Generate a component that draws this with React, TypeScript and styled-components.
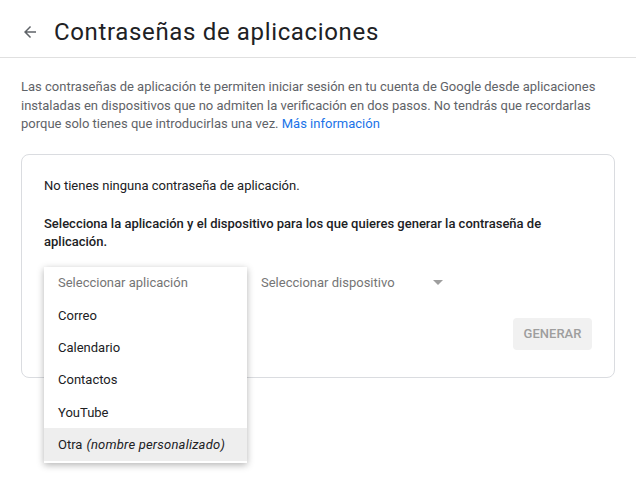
import React from 'react';
import styled, { createGlobalStyle } from 'styled-components';

const GlobalStyle = createGlobalStyle`
  html, body {
    margin: 0;
    padding: 0;
    background: #fff;
    font-family: Roboto, "Liberation Sans", Arial, sans-serif;
    -webkit-font-smoothing: antialiased;
  }
`;

const Page = styled.div`
  width: 636px;
  height: 484px;
  overflow: hidden;
  background: #fff;
`;

const Header = styled.header`
  display: flex;
  align-items: center;
  height: 58px;
  padding: 6px 0 0 20px;
  box-sizing: border-box;
  border-bottom: 1px solid #e0e0e0;
`;

const BackButton = styled.button`
  display: flex;
  align-items: center;
  justify-content: center;
  width: 20px;
  height: 20px;
  padding: 0;
  margin-right: 14px;
  border: none;
  background: none;
  color: #5f6368;
  cursor: pointer;
`;

const Title = styled.h1`
  margin: 0;
  font-family: Roboto, "Liberation Sans", Arial, sans-serif;
  font-size: 24px;
  font-weight: 400;
  color: #202124;
  letter-spacing: 0.65px;
`;

const Content = styled.main`
  padding: 20px 21px 0 21px;
`;

const Description = styled.div`
  margin: 0 0 20px;
  font-size: 13px;
  line-height: 18.5px;
  color: #5f6368;
`;

const Link = styled.a`
  color: #1a73e8;
  text-decoration: none;
`;

const Card = styled.section`
  border: 1px solid #dadce0;
  border-radius: 8px;
  padding: 22px 22px 27px 22px;
`;

const Text = styled.p<{ $strong?: boolean; $gap?: number }>`
  margin: 0 0 ${(p) => p.$gap ?? 0}px;
  font-size: 13px;
  line-height: 18px;
  color: #202124;
  font-weight: ${(p) => (p.$strong ? 500 : 400)};
`;

const SelectRow = styled.div`
  display: flex;
  align-items: center;
  height: 32px;
  gap: 14px;
`;

const SelectBox = styled.div<{ $width: number }>`
  position: relative;
  display: flex;
  align-items: center;
  justify-content: space-between;
  width: ${(p) => p.$width}px;
  height: 32px;
  font-size: 13px;
  color: #757575;
`;

const Caret = styled.span`
  width: 0;
  height: 0;
  margin-right: 2px;
  border-left: 5px solid transparent;
  border-right: 5px solid transparent;
  border-top: 5px solid #9e9e9e;
`;

const Menu = styled.ul`
  position: absolute;
  top: 0;
  left: 0;
  width: 203px;
  margin: 0;
  padding: 0 0 2px;
  list-style: none;
  background: #fff;
  box-shadow: 0 2px 7px rgba(0, 0, 0, 0.3);
  z-index: 2;
`;

const MenuItem = styled.li<{ $placeholder?: boolean; $active?: boolean }>`
  display: flex;
  align-items: center;
  height: 32.4px;
  padding: 0 14px;
  font-size: 13px;
  color: ${(p) => (p.$placeholder ? '#757575' : '#202124')};
  background: ${(p) => (p.$active ? '#eeeeee' : 'transparent')};
  white-space: nowrap;

  em {
    margin-left: 4px;
    font-style: italic;
    letter-spacing: 0.2px;
  }
`;

const Actions = styled.div`
  display: flex;
  justify-content: flex-end;
  margin-top: 19px;
`;

const GenerateButton = styled.button`
  width: 79px;
  height: 32px;
  padding: 0;
  border: none;
  border-radius: 4px;
  background: #f1f1f1;
  color: #9e9e9e;
  font-family: Roboto, "Liberation Sans", Arial, sans-serif;
  font-size: 13px;
  font-weight: 500;
`;

const apps = ['Correo', 'Calendario', 'Contactos', 'YouTube'];

const App: React.FC = () => {
  return (
    <Page>
      <GlobalStyle />
      <Header>
        <BackButton aria-label="Atrás">
          <svg width="18" height="18" viewBox="0 0 24 24" fill="currentColor">
            <path d="M20 11H7.83l5.59-5.59L12 4l-8 8 8 8 1.41-1.41L7.83 13H20v-2z" />
          </svg>
        </BackButton>
        <Title>Contraseñas de aplicaciones</Title>
      </Header>
      <Content>
        <Description>
          Las contraseñas de aplicación te permiten iniciar sesión en tu cuenta de Google desde aplicaciones
          instaladas en dispositivos que no admiten la verificación en dos pasos. No tendrás que recordarlas
          porque solo tienes que introducirlas una vez. <Link href="#">Más información</Link>
        </Description>
        <Card>
          <Text $gap={20}>No tienes ninguna contraseña de aplicación.</Text>
          <Text $strong $gap={16}>
            Selecciona la aplicación y el dispositivo para los que quieres generar la contraseña de aplicación.
          </Text>
          <SelectRow>
            <SelectBox $width={203}>
              <Menu>
                <MenuItem $placeholder>Seleccionar aplicación</MenuItem>
                {apps.map((a) => (
                  <MenuItem key={a}>{a}</MenuItem>
                ))}
                <MenuItem $active>
                  Otra<em>(nombre personalizado)</em>
                </MenuItem>
              </Menu>
            </SelectBox>
            <SelectBox $width={184}>
              Seleccionar dispositivo
              <Caret />
            </SelectBox>
          </SelectRow>
          <Actions>
            <GenerateButton disabled>GENERAR</GenerateButton>
          </Actions>
        </Card>
      </Content>
    </Page>
  );
};

export default App;
